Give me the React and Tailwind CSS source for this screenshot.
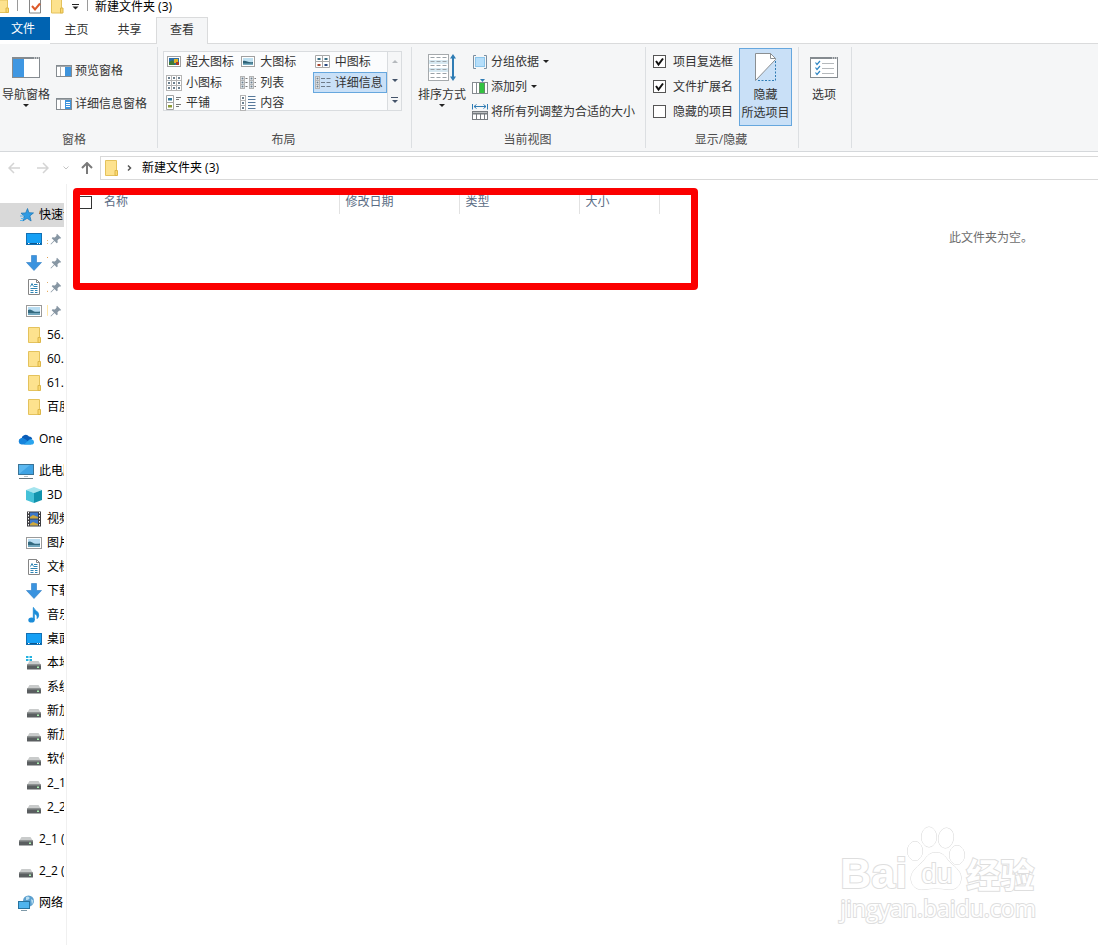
const placesTop = [
  { icon: 'desktop', label: '桌面', pinned: true },
  { icon: 'download', label: '下载', pinned: true },
  { icon: 'document', label: '文档', pinned: true },
  { icon: 'picture', label: '图片', pinned: true },
  { icon: 'folder', label: '56.' },
  { icon: 'folder', label: '60.' },
  { icon: 'folder', label: '61.' },
  { icon: 'folder', label: '百度' },
];

const placesPc = [
  { icon: 'cube', label: '3D' },
  { icon: 'video', label: '视频' },
  { icon: 'picture', label: '图片' },
  { icon: 'document', label: '文档' },
  { icon: 'download', label: '下载' },
  { icon: 'music', label: '音乐' },
  { icon: 'desktop', label: '桌面' },
  { icon: 'system', label: '本地' },
  { icon: 'drive', label: '系统' },
  { icon: 'drive', label: '新加' },
  { icon: 'drive', label: '新加' },
  { icon: 'drive', label: '软件' },
  { icon: 'drive', label: '2_1' },
  { icon: 'drive', label: '2_2' },
];

const sections = [
  { icon: 'star', label: '快速访问', active: true, items: placesTop },
  { icon: 'cloud', label: 'One', items: [] },
  { icon: 'pc', label: '此电脑', items: placesPc },
  { icon: 'drive', label: '2_1 (', items: [] },
  { icon: 'drive', label: '2_2 (', items: [] },
  { icon: 'network', label: '网络', items: [] },
];

const layouts = [
  { icon: 'xlarge', label: '超大图标' },
  { icon: 'large', label: '大图标' },
  { icon: 'medium', label: '中图标' },
  { icon: 'small', label: '小图标' },
  { icon: 'list', label: '列表' },
  { icon: 'details', label: '详细信息', selected: true },
  { icon: 'tiles', label: '平铺' },
  { icon: 'content', label: '内容' },
];

function Drive() {
  return (
    <>
      <path d="M3.5 6h9l2.5 4H1z" fill="#c9cbcb" />
      <rect x="1" y="9.5" width="14" height="5" rx=".5" fill="#5a5e60" />
      <rect x="1" y="9.5" width="14" height="1" fill="#8b8f90" />
      <rect x="11" y="11.5" width="2" height="1.5" fill="#a8f0b0" />
    </>
  );
}

const placeIcons = {
  star: (
    <>
      <path d="M9.500 1.500l1.400 4.200 4.600.2-3.600 3 1.200 5.100-4-2.700-4.300 2.700 1.500-4.900L3 6.200l4.700-.3z" fill="#2f9be3" stroke="#1673b5" strokeWidth=".7" />
      <path d="M2 9h4M3 11.500h3M2 13.500h3" stroke="#5cb4ec" strokeWidth="1" />
    </>
  ),
  desktop: (
    <>
      <rect x=".5" y="2.500" width="15" height="11" fill="#15a0f5" stroke="#1170b4" />
      <path d="M1 12.500h14" stroke="#0b568e" />
      <path d="M2 12.500h1.500M11 12.500h1M13 12.500h1" stroke="#fff" />
    </>
  ),
  download: <path d="M5.500.5h5v7H15.500L8 15.500.5 7.500h5z" fill="#3a93df" stroke="#2b7cc4" strokeWidth=".6" />,
  document: (
    <>
      <path d="M2.500.5h8l3 3v12h-11z" fill="#fff" stroke="#858585" />
      <path d="M10.500.5v3h3" fill="none" stroke="#858585" />
      <path d="M8 5.500h3.500M8 7.500h3.500M4.500 9.500h7M4.500 11.500h3M4.500 13.500h3M9 11.500h2.500M9 13.500h2.500" stroke="#2f86b5" />
      <path d="M4.500 7.500l1.500-3 1.500 3" fill="none" stroke="#2f86b5" />
    </>
  ),
  picture: (
    <>
      <rect x=".5" y="2.500" width="15" height="11" fill="#fff" stroke="#9a9a9a" />
      <rect x="2" y="4" width="12" height="8" fill="#b9ddf2" />
      <path d="M2 7c2-1.500 4 0 6 1.500 2 .5 4 .2 6 0v2H2z" fill="#33697f" />
      <path d="M2 10.500h12V12H2z" fill="#6fa6bd" />
    </>
  ),
  folder: (
    <>
      <path d="M2.500.5h11v15h-11z" fill="#fde28e" stroke="#e4c25c" />
      <path d="M12 10.500h2.500v5H12z" fill="#fbd86f" stroke="#dcb649" />
    </>
  ),
  cloud: (
    <>
      <path d="M3.500 7.500A4.200 4.200 0 0 1 11 5.500c2 0 3 1 3.200 2.600L8 12.500z" fill="#0a5db8" />
      <path d="M3.500 13.500a3.300 3.300 0 0 1-.8-6.300c2-.6 3.500.2 5 1.300l5.800 4.700c-.3.200-.8.300-1.500.3z" fill="#1684dc" />
      <path d="M6 13.500L11.500 8.500c2.500-.8 4.500.8 4.500 2.700 0 1.400-1 2.300-2.400 2.300z" fill="#2ba5ee" />
    </>
  ),
  pc: (
    <>
      <rect x=".5" y="1.500" width="15" height="10" fill="#5cb8f0" stroke="#3a7396" />
      <path d="M1 11L12 2h3v9z" fill="#3fa3e4" />
      <path d="M6 13.500h4" stroke="#b9c3c9" />
      <path d="M1 15.500h14" stroke="#66747c" />
    </>
  ),
  cube: (
    <>
      <path d="M8 0l8 3-8 3-8-3z" fill="#a4e4ee" />
      <path d="M0 3l8 3v10l-8-3z" fill="#45c1d8" />
      <path d="M16 3L8 6v10l8-3z" fill="#1193ad" />
    </>
  ),
  video: (
    <>
      <rect x="1" y=".5" width="14" height="15" fill="#3c3c40" />
      <rect x="4" y="1.500" width="8" height="6" fill="#3e78c8" />
      <rect x="4" y="8.500" width="8" height="6" fill="#3e78c8" />
      <path d="M4 6l3-2 5 2v1.500H4zM4 13l3-2 5 2v1.500H4z" fill="#d0a83a" />
      <path d="M2.500 1v14M13.500 1v14" stroke="#fff" strokeDasharray="1.500 1.500" />
    </>
  ),
  music: (
    <>
      <path d="M7.500.5c.8 3 5.200 3.500 5.200 7.500 0 1.500-.6 2.800-1.600 3.600.5-2.800-.8-4.300-2.800-5.100V13h-1V.5z" fill="#1b8cd8" stroke="#1b8cd8" strokeWidth=".8" />
      <ellipse cx="5.500" cy="13" rx="3.200" ry="2.600" fill="#1b8cd8" />
    </>
  ),
  drive: <Drive />,
  system: (
    <>
      <Drive />
      <path d="M0 1h2.500v2H0zM3.500 1H6v2H3.500zM0 4h2.500v2H0zM3.500 4H6v2H3.500z" fill="#23b2e0" />
    </>
  ),
  network: (
    <>
      <circle cx="10.500" cy="6" r="5.500" fill="#5b9fce" />
      <path d="M8 2c2-1.500 4 0 3.500 1.500S9 5 8 5zM13 4l2.500 1.500L14 10z" fill="#b8def2" />
      <rect x=".5" y="6.500" width="11" height="7" fill="#4fb4ee" stroke="#27739f" />
      <path d="M3 15.500h6" stroke="#7e99a8" />
    </>
  ),
};

function PlaceIcon({ name }) {
  return (
    <svg viewBox="0 0 16 16" className="size-4 shrink-0" aria-hidden="true">
      {placeIcons[name]}
    </svg>
  );
}

function Pin() {
  return (
    <svg viewBox="0 0 12 12" className="size-3 shrink-0" aria-hidden="true">
      <path d="M7 .8L11.200 5l-1.200.7-.7-.3-1.800 1.800.2 2.300-1 .8L4.500 8 1 11.500.5 11 4 7.500 1.700 5.300l.8-1 2.300.2L6.600 2.700 6.300 2z" fill="#8796a3" />
    </svg>
  );
}

function Cells({ at, size = 5 }) {
  return at.map(([x, y]) => (
    <g key={`${x}-${y}`}>
      <rect x={x + 0.5} y={y + 0.5} width={size} height={size} fill="#fff" stroke="#b5b5b5" />
      <rect x={x + size / 2 - 0.5} y={y + size / 2 - 0.5} width="2" height="2" fill="#6b7f8e" />
    </g>
  ));
}

const layoutIcons = {
  xlarge: (
    <>
      <rect x="1.500" y="2.500" width="13" height="10" fill="#fff" stroke="#a0a0a0" />
      <rect x="3" y="4" width="10" height="7" fill="#2d6fa8" />
      <path d="M3 8l4-2 2 5H3z" fill="#3f7a35" />
      <rect x="8" y="5" width="4" height="4" fill="#e2b023" />
      <rect x="10" y="8" width="3" height="3" fill="#a83a2a" />
    </>
  ),
  large: (
    <>
      <rect x="1.500" y="2.500" width="13" height="10" fill="#fff" stroke="#a0a0a0" />
      <rect x="3" y="4" width="10" height="7" fill="#bfe0f0" />
      <path d="M3 7c3-1 5 2 10 1v2H3z" fill="#2f6277" />
      <rect x="3" y="9.500" width="10" height="1.500" fill="#78adc2" />
    </>
  ),
  medium: (
    <>
      <path d="M.5 1.500h7v6h-7zM7.500 1.500h7v6h-7zM.5 7.500h7v6h-7zM7.500 7.500h7v6h-7z" fill="#fff" stroke="#a8a8a8" />
      <path d="M2.500 4h3v2h-3zM9.500 4h3v2h-3z" fill="#3c6f84" />
      <path d="M2.500 10h3v2h-3z" fill="#a8432b" />
      <path d="M9.500 10h3v2h-3z" fill="#27467e" />
    </>
  ),
  small: <Cells at={[[0, 0], [5, 0], [10, 0], [0, 5], [5, 5], [10, 5], [0, 10], [5, 10], [10, 10]]} />,
  list: (
    <>
      <Cells at={[[0, 1], [0, 5], [0, 9], [9, 1], [9, 5], [9, 9]]} size={4} />
      <path d="M5.500 3.500h2M5.500 7.500h2M5.500 11.500h2M14.500 3.500h1.500M14.500 7.500h1.500M14.500 11.500h1.500" stroke="#7a7a7a" />
    </>
  ),
  details: (
    <>
      <Cells at={[[0, 1], [0, 5], [0, 9]]} size={4} />
      <path d="M6 3.500h4M11.500 3.500h4M6 7.500h4M11.500 7.500h4M6 11.500h4M11.500 11.500h4" stroke="#6d7a88" />
    </>
  ),
  tiles: (
    <>
      <path d="M.5.5h7v7h-7zM.5 7.500h7v7h-7z" fill="#fff" stroke="#a3a3a3" />
      <path d="M2 3h4v2.500H2z" fill="#35799b" />
      <path d="M2 10h4v2.500H2z" fill="#8b9a35" />
      <path d="M10 2.500h5M10 4.500h3M10 9.500h5M10 11.500h3" stroke="#777" />
    </>
  ),
  content: (
    <>
      <Cells at={[[0, 0], [0, 5], [0, 10]]} />
      <path d="M8 1.500h7.500M8 4.500h7.500M8 7.500h7.500M8 10.500h7.500M8 13.500h7.500" stroke="#56789a" />
    </>
  ),
};

function Caret({ className = 'fill-[#222]' }) {
  return (
    <svg viewBox="0 0 6 3" className={`h-[3px] w-[6px] shrink-0 ${className}`} aria-hidden="true">
      <path d="M0 0h6L3 3z" />
    </svg>
  );
}

function Group({ title, children, className = '' }) {
  return (
    <section className={`my-[3px] flex flex-col justify-between border-r border-[#dcdfe2] ${className}`}>
      <div className="flex pt-px">{children}</div>
      {title && <h2 className="h-[17px] pr-[2px] text-center leading-[18px] text-[#4d4d4d]">{title}</h2>}
    </section>
  );
}

function BigButton({ icon, label, caret, className = '' }) {
  return (
    <button className={`flex shrink-0 flex-col items-center whitespace-pre-line leading-[18px] ${className}`}>
      <span className="flex h-[38px] items-center">{icon}</span>
      <span>{label}</span>
      {caret && <Caret />}
    </button>
  );
}

function PaneIcon({ details }) {
  return (
    <svg viewBox="0 0 16 12" className="h-3 w-4 shrink-0" aria-hidden="true">
      <rect x=".5" y=".5" width="15" height="11" fill="#fff" stroke="#858b90" />
      <path d="M0 1h16" stroke="#858b90" strokeWidth="1.500" />
      <path d="M4.500 2v9" stroke="#a9adb0" />
      <rect x="9" y="2" width="6" height="9" fill="#3f94dc" />
      {details && <path d="M10 4.500h4M10 6.500h4M10 8.500h4" stroke="#fff" />}
    </svg>
  );
}

const navPaneIcon = (
  <svg viewBox="0 0 28 21" className="h-[21px] w-7" aria-hidden="true">
    <rect x=".5" y=".5" width="27" height="20" fill="#fff" stroke="#858b90" />
    <path d="M0 1h28" stroke="#858b90" strokeWidth="2" />
    <path d="M22 1h1M24 1h1M26 1h1" stroke="#fff" />
    <rect x="1" y="2" width="11" height="18" fill="#3f97e2" />
  </svg>
);

const sortIcon = (
  <svg viewBox="0 0 28 27" className="h-[27px] w-7" aria-hidden="true">
    <rect x=".5" y=".5" width="20" height="26" fill="#fff" stroke="#a5a9ac" />
    <path d="M1 6h19v4H1zM1 14h19v4H1z" fill="#d7e9f2" />
    <path d="M2.500 3.500h16.500M2.500 7.500h16.500M2.500 11.500h16.500M2.500 15.500h16.500M2.500 19.500h16.500M2.500 23.500h16.500" stroke="#9aa2a8" strokeDasharray="4 2" />
    <path d="M25 3v21" stroke="#2f7cb4" strokeWidth="2" />
    <path d="M22 4.500l3-4.500 3 4.500zM22 22.500l3 4.500 3-4.500z" fill="#2f7cb4" />
  </svg>
);

const hideIcon = (
  <svg viewBox="0 0 22 28" className="h-7 w-[22px]" aria-hidden="true">
    <path d="M.5 27.500V.5h15l5 5v1z" fill="#fff" stroke="#8b8f92" />
    <path d="M15.500.5v5h5z" fill="#fff" stroke="#8b8f92" />
    <path d="M20.500 8v19.500H2" fill="none" stroke="#2f7cb4" strokeDasharray="2 1.500" />
  </svg>
);

const optionsIcon = (
  <svg viewBox="0 0 28 21" className="h-[21px] w-7" aria-hidden="true">
    <rect x=".5" y=".5" width="27" height="20" fill="#fff" stroke="#858b90" />
    <path d="M0 1h28" stroke="#858b90" strokeWidth="2" />
    <path d="M22 1h1M24 1h1M26 1h1" stroke="#fff" />
    <path d="M5.500 5.500l1.500 2 3-3.500M5.500 10.500l1.500 2 3-3.500M5.500 15.500l1.500 2 3-3.500" fill="none" stroke="#2f86c4" strokeWidth="1.200" />
    <path d="M12 6.500h12M12 11.500h12M12 16.500h12" stroke="#b5b9bc" />
  </svg>
);

const groupByIcon = (
  <svg viewBox="0 0 16 16" className="size-4 shrink-0" aria-hidden="true">
    <path d="M4 1.500H1.500v13H4M12 1.500h2.500v13H12" fill="none" stroke="#7a8ea0" />
    <rect x="3.500" y="3.500" width="9" height="9" fill="#b5defa" stroke="#8cc6ec" />
  </svg>
);

const addColumnIcon = (
  <svg viewBox="0 0 16 16" className="size-4 shrink-0" aria-hidden="true">
    <rect x=".5" y="3.500" width="15" height="11" fill="#fff" stroke="#858b90" />
    <path d="M4.500 4v10" stroke="#858b90" />
    <rect x="8" y="4" width="5" height="10" fill="#32c341" />
    <path d="M7.500 4v10M12.500 4v10" stroke="#5f8f64" />
    <path d="M8 0h5l-2.500 3z" fill="#2f7cb4" />
  </svg>
);

const fitColumnsIcon = (
  <svg viewBox="0 0 16 16" className="size-4 shrink-0" aria-hidden="true">
    <path d="M.5 0v5.500M15.500 0v5.500M2 2.500h12M4.500.5l-2.500 2 2.500 2M11.500.5l2.500 2-2.500 2" fill="none" stroke="#2f7cb4" />
    <rect x=".5" y="7.500" width="15" height="8" fill="#fff" stroke="#777c80" />
    <path d="M1 9.500h14" stroke="#777c80" strokeWidth="2" />
    <path d="M4.500 10v5M8.500 10v5M12.500 10v5" stroke="#777c80" />
  </svg>
);

function ViewButton({ icon, label, caret }) {
  return (
    <button className="flex h-[25px] items-center gap-[3px] whitespace-nowrap">
      {icon}
      {label}
      {caret && <span className="pl-px"><Caret /></span>}
    </button>
  );
}

function CheckOption({ label, checked }) {
  return (
    <label className="flex h-[25px] items-center gap-[7px] whitespace-nowrap">
      <span className="grid">
        <input type="checkbox" defaultChecked={checked} className="peer col-start-1 row-start-1 size-[13px] appearance-none border border-[#555] bg-white" />
        <svg viewBox="0 0 13 13" className="pointer-events-none invisible col-start-1 row-start-1 size-[13px] peer-checked:visible" aria-hidden="true">
          <path d="M3 6l2.500 3.500L10 3.500" fill="none" stroke="#111" strokeWidth="2" />
        </svg>
      </span>
      {label}
    </label>
  );
}

function TitleBar() {
  return (
    <header className="flex h-[17px] items-start">
      <svg viewBox="0 0 92 14" className="h-[14px] w-[92px] shrink-0" aria-hidden="true">
        <path d="M-4 0H7.500v12.500H-4z" fill="#fde28e" stroke="#e4c25c" />
        <path d="M6 8h2.500v4.500H6z" fill="#fbd86f" stroke="#dcb649" />
        <path d="M17.500 0v11M87.500 0v11" stroke="#9a9a9a" />
        <path d="M29.500-1h11v14h-11z" fill="#fff" stroke="#858585" />
        <path d="M32 6l3 3.500 5-6" fill="none" stroke="#dd5a2b" strokeWidth="2" />
        <path d="M51.500-1h10v14h-10z" fill="#fde28e" stroke="#e4c25c" />
        <path d="M60.500 8H63v5h-2.500z" fill="#fbd86f" stroke="#dcb649" />
        <path d="M72 4.500h7" stroke="#222" />
        <path d="M72.500 6.500h6l-3 3z" fill="#222" />
      </svg>
      <h1 className="pl-[3px] leading-[13px] text-black">新建文件夹 (3)</h1>
    </header>
  );
}

function Tabs() {
  return (
    <nav className="flex h-[27px] items-start">
      <button className="h-[23px] w-[50px] bg-[#0063b1] pr-1 text-white">文件</button>
      <div className="flex h-full grow border-b border-[#dadbdc]">
        <button className="w-[53px] pb-px">主页</button>
        <button className="w-[53px] pb-px">共享</button>
        <button className="-mb-px w-[52px] border-x border-t border-[#dadbdc] bg-[#f5f6f7] pb-[2px]">查看</button>
      </div>
    </nav>
  );
}

function Ribbon() {
  return (
    <div className="flex h-[108px] border-b border-[#d5d8db] bg-[#f5f6f7]">
      <Group title="窗格" className="w-[158px] shrink-0 pr-[7px]">
        <BigButton icon={navPaneIcon} label="导航窗格" caret className="w-[52px]" />
        <div className="flex flex-col pl-1 pt-[6px]">
          <button className="flex h-[33px] items-center gap-[3px] whitespace-nowrap"><PaneIcon />预览窗格</button>
          <button className="flex h-[33px] items-center gap-[3px] whitespace-nowrap"><PaneIcon details />详细信息窗格</button>
        </div>
      </Group>
      <Group title="布局" className="w-[254px] shrink-0">
        <div className="ml-[5px] mt-[3px] flex h-[60px] w-[239px] border border-[#d9dcdf] bg-[#fbfcfd]">
          <div className="grid grow grid-cols-3 grid-rows-[20px_21px_20px]">
            {layouts.map((item) => (
              <button
                key={item.label}
                className={`flex items-center gap-1 whitespace-nowrap border pl-px ${
                  item.selected ? 'border-[#66a7de] bg-[#c9e0f7]' : 'border-transparent'
                }`}
              >
                <svg viewBox="0 0 16 16" className="size-4 shrink-0" aria-hidden="true">{layoutIcons[item.icon]}</svg>
                {item.label}
              </button>
            ))}
          </div>
          <div className="grid w-[14px] shrink-0 grid-rows-3 border-l border-[#d9dcdf] bg-[#f5f6f7]">
            <button className="flex items-center justify-center" aria-label="向上"><Caret className="rotate-180 fill-[#b5b9bd]" /></button>
            <button className="flex items-center justify-center" aria-label="向下"><Caret className="fill-[#44546a]" /></button>
            <button className="flex flex-col items-center justify-center gap-[2px]" aria-label="更多">
              <span className="h-px w-[7px] bg-[#44546a]" />
              <Caret className="fill-[#44546a]" />
            </button>
          </div>
        </div>
      </Group>
      <Group title="当前视图" className="w-[234px] shrink-0">
        <BigButton icon={sortIcon} label="排序方式" caret className="ml-1 w-[52px]" />
        <div className="flex flex-col pl-1 pt-px">
          <ViewButton icon={groupByIcon} label="分组依据" caret />
          <ViewButton icon={addColumnIcon} label="添加列" caret />
          <ViewButton icon={fitColumnsIcon} label="将所有列调整为合适的大小" />
        </div>
      </Group>
      <Group title="显示/隐藏" className="w-[153px] shrink-0">
        <div className="flex flex-col pl-[7px] pt-px">
          <CheckOption label="项目复选框" checked />
          <CheckOption label="文件扩展名" checked />
          <CheckOption label="隐藏的项目" />
        </div>
        <BigButton
          icon={hideIcon}
          label={'隐藏\n所选项目'}
          className="ml-[6px] h-[78px] w-[53px] bg-[#c9e0f7] outline -outline-offset-1 outline-[#66a7de]"
        />
      </Group>
      <Group className="w-[53px] shrink-0">
        <BigButton icon={optionsIcon} label="选项" className="w-[50px]" />
      </Group>
    </div>
  );
}

function AddressBar() {
  return (
    <div className="flex h-8 items-center">
      <div className="flex w-[100px] shrink-0 items-center">
        <button className="flex w-[27px] justify-center" aria-label="后退">
          <svg viewBox="0 0 12 12" className="size-3 fill-none stroke-[#d4d4d4]"><path d="M12 6H1M6 1L1 6l5 5" strokeWidth="1.500" /></svg>
        </button>
        <button className="flex w-[31px] justify-center" aria-label="前进">
          <svg viewBox="0 0 12 12" className="size-3 fill-none stroke-[#d4d4d4]"><path d="M0 6h11M6 1l5 5-5 5" strokeWidth="1.500" /></svg>
        </button>
        <button className="flex w-[16px] justify-center" aria-label="最近位置">
          <svg viewBox="0 0 6 4" className="h-1 w-[6px] fill-none stroke-[#c4c4c4]"><path d="M.5.5L3 3 5.500.5" /></svg>
        </button>
        <button className="flex w-[26px] justify-center" aria-label="向上一级">
          <svg viewBox="0 0 12 12" className="size-3 fill-none stroke-[#7a7a7a]"><path d="M6 12V1M1 6l5-5 5 5" strokeWidth="2" /></svg>
        </button>
      </div>
      <div className="flex h-6 grow items-center border-y border-l border-[#d9d9d9] pl-[2px]">
        <PlaceIcon name="folder" />
        <svg viewBox="0 0 5 8" className="ml-2 h-2 w-[5px] fill-none stroke-[#555]" aria-hidden="true"><path d="M1 1.500L3.500 4 1 6.500" strokeWidth="1.500" /></svg>
        <button className="ml-[10px] text-black">新建文件夹 (3)</button>
      </div>
    </div>
  );
}

function Sidebar() {
  return (
    <aside className="flex w-[67px] shrink-0 flex-col gap-2 overflow-hidden border-r border-[#f0f0f0] pr-[2px] pt-[19px] text-black">
      {sections.map((section) => (
        <div key={section.label}>
          <a href="#" className={`flex h-6 items-center gap-[5px] overflow-hidden whitespace-nowrap pl-[18px] ${section.active ? 'bg-[#d9d9d9]' : ''}`}>
            <PlaceIcon name={section.icon} />
            {section.label}
          </a>
          {section.items.map((item, i) => (
            <a key={i} href="#" className="flex h-6 items-center gap-[5px] overflow-hidden whitespace-nowrap pl-[26px]">
              <PlaceIcon name={item.icon} />
              <span className={item.pinned ? 'w-px shrink-0 overflow-hidden' : ''}>{item.label}</span>
              {item.pinned && <span className="-ml-[3px]"><Pin /></span>}
            </a>
          ))}
        </div>
      ))}
    </aside>
  );
}

function FileList() {
  return (
    <main className="relative grow pl-[10px] pt-[6px]">
      <table className="table-fixed border-collapse text-left text-[#5a6c84]">
        <thead>
          <tr className="h-6">
            <th className="w-[20px] pl-[2px]">
              <input type="checkbox" aria-label="全选" className="block size-[13px] appearance-none border border-[#333] bg-white" />
            </th>
            <th className="w-[242px] border-r border-[#e2e2e2] pl-[7px] font-normal">名称</th>
            <th className="w-[120px] border-r border-[#e2e2e2] pl-[6px] font-normal">修改日期</th>
            <th className="w-[120px] border-r border-[#e2e2e2] pl-[6px] font-normal">类型</th>
            <th className="w-[80px] border-r border-[#e2e2e2] pl-[6px] font-normal">大小</th>
          </tr>
        </thead>
      </table>
      <p className="pr-[65px] pt-4 text-right text-[#6d6d6d]">此文件夹为空。</p>
      <div className="pointer-events-none absolute left-[6px] top-1 h-[102px] w-[625px] rounded-[4px] border-[7px] border-[#fb0000]" />
      <Watermark />
    </main>
  );
}

function Watermark() {
  return (
    <div
      className="pointer-events-none absolute bottom-[21px] right-[62px] text-white [-webkit-text-stroke:2px_#dedede] [paint-order:stroke_fill]"
      aria-hidden="true"
    >
      <div className="flex items-end">
        <span className="w-[67px] font-['Liberation_Sans'] text-[43px] leading-[38px] font-bold">Bai</span>
        <div className="relative h-[66px] w-[59px]">
          <svg viewBox="0 0 59 66" className="h-[66px] w-[59px] fill-white stroke-[#d8d8d8]">
            <ellipse cx="8" cy="25" rx="7.500" ry="9.500" />
            <ellipse cx="22" cy="11" rx="7.500" ry="10" />
            <ellipse cx="39" cy="12" rx="7.500" ry="10" transform="rotate(10 39 12)" />
            <ellipse cx="50" cy="29" rx="7.500" ry="9.500" />
            <path d="M29 26.500c8 0 10 6 14 10 6 5 12 10 11 17-1 8-7 10.500-13 10-8-1.500-16-1.500-24 0-6 .5-12-2-13-10-.5-7 5-12 11-17 4-4 6-10 14-10z" />
          </svg>
          <span className="absolute inset-x-0 bottom-[3px] text-center font-['Liberation_Sans'] text-[28px] leading-[30px]">du</span>
        </div>
        <span className="text-[34px] leading-[34px] font-bold">经验</span>
      </div>
      <div className="whitespace-nowrap font-['Open_Sans'] text-[23px] leading-[32px]">jingyan.baidu.com</div>
    </div>
  );
}

export default function App() {
  return (
    <div className="flex min-h-screen flex-col bg-white font-['Open_Sans','Noto_Sans_CJK_SC',sans-serif] text-[12px] leading-[16px] text-[#333]">
      <TitleBar />
      <Tabs />
      <Ribbon />
      <AddressBar />
      <div className="flex grow">
        <Sidebar />
        <FileList />
      </div>
    </div>
  );
}
